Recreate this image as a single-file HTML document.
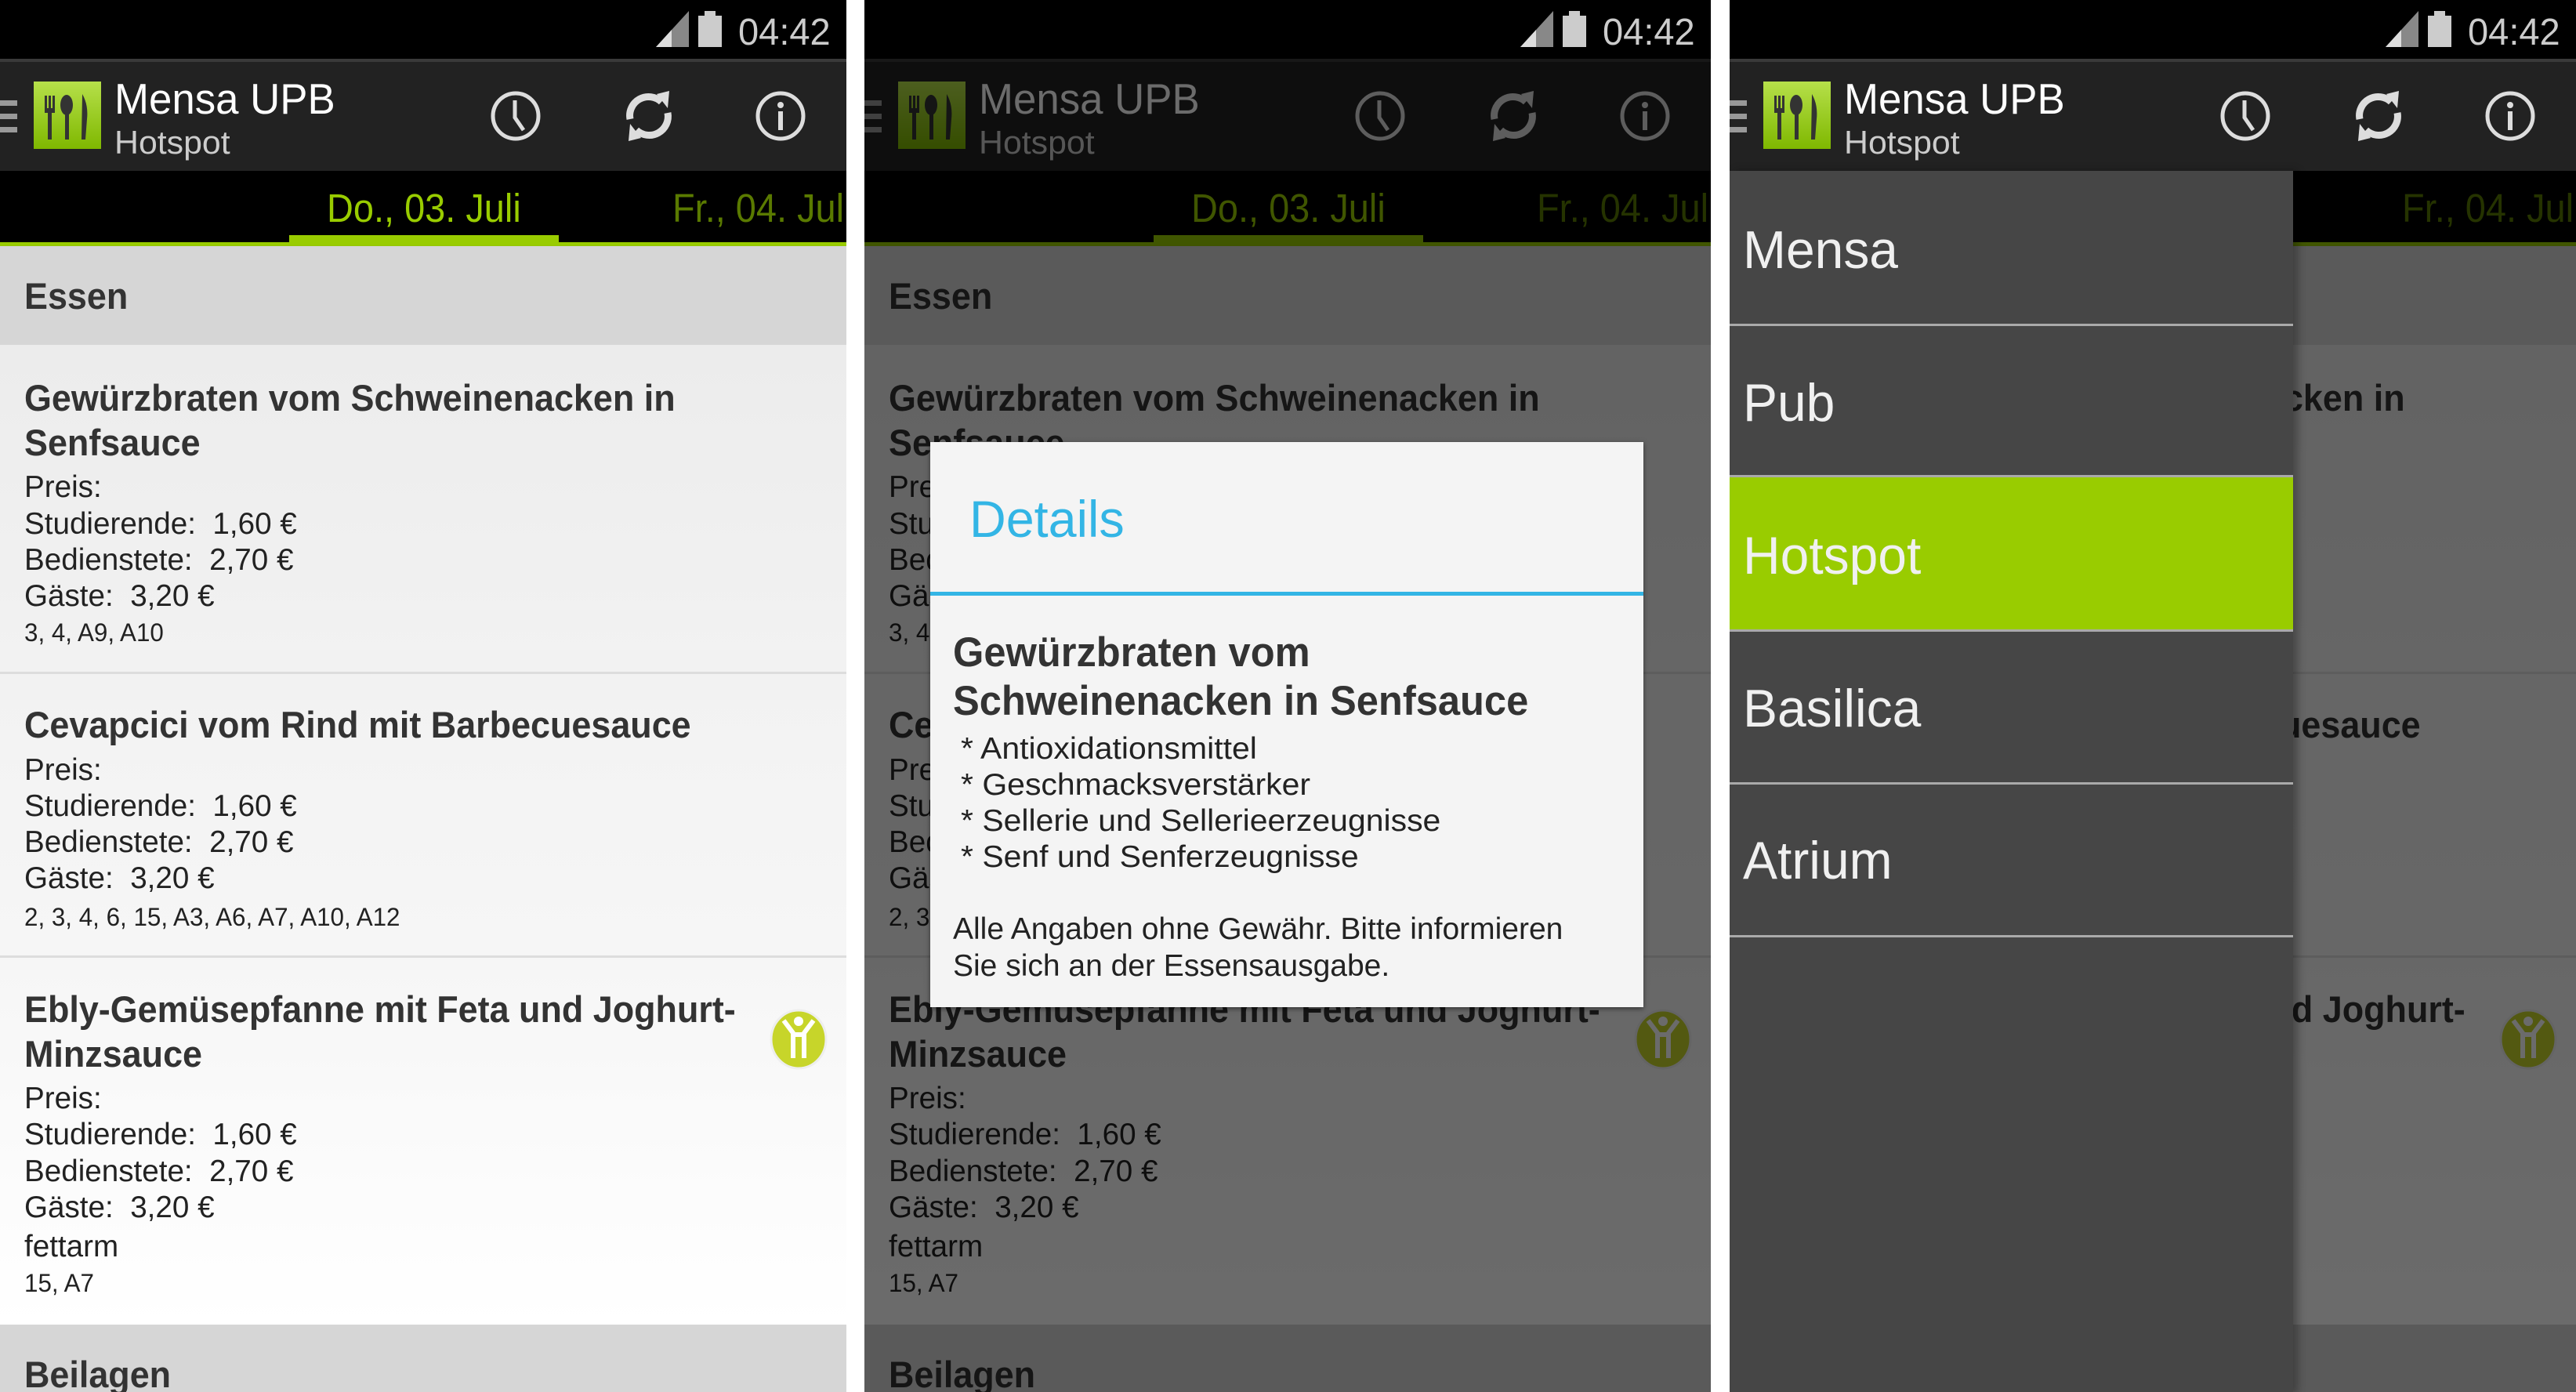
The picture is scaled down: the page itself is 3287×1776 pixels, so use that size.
<!DOCTYPE html>
<html><head><meta charset="utf-8"><style>
*{margin:0;padding:0;box-sizing:border-box}
body{width:3287px;height:1776px;background:#fff;position:relative;overflow:hidden;font-family:"Liberation Sans",sans-serif}
.p{position:absolute;top:0;width:1080px;height:1776px;overflow:hidden;background:#f5f5f5}
.a{position:absolute;white-space:nowrap;transform-origin:left center}
.sb{position:absolute;left:0;top:0;width:1080px;height:75px;background:#000}
.ab{position:absolute;left:0;top:75px;width:1080px;height:143px;background:#222;border-top:4px solid #3a3a3a}
.tb{position:absolute;left:0;top:218px;width:1080px;height:92px;background:#000}
.gl{position:absolute;left:0;top:309px;width:1080px;height:5px;background:#99cc00}
.ind{position:absolute;left:369px;top:300px;width:344px;height:14px;background:#99cc00}
.hd{position:absolute;left:0;width:1080px;background:#d6d6d6}
.it{position:absolute;left:0;width:1080px;border-bottom:3px solid #ddd}
.ti{font-weight:bold;font-size:47px;line-height:57px;color:#333;left:31px;transform:scaleX(.955)}
.bd{font-size:39px;line-height:46px;color:#222;left:31px;transform:scaleX(.99)}
.cd{font-size:32px;line-height:38px;color:#222;left:31px;transform:scaleX(.98)}
</style></head><body>

<div class="p" style="left:0">
<div class="sb"></div>
<svg class="a" style="left:835px;top:12px" width="110" height="50" viewBox="0 0 110 50"><polygon points="2,48 44,2 44,48" fill="#888"/><polygon points="2,48 22,26 22,48" fill="#ddd"/><rect x="56" y="8" width="30" height="40" fill="#ccc"/><rect x="64" y="2" width="14" height="7" fill="#ccc"/></svg>
<div class="a" style="left:942px;top:14px;font-size:48px;color:#ccc;transform:scaleX(.98)">04:42</div>
<div class="ab"></div>
<div class="a" style="left:0;top:128px;width:22px;height:7px;background:#999"></div><div class="a" style="left:0;top:145px;width:22px;height:7px;background:#999"></div><div class="a" style="left:0;top:162px;width:22px;height:7px;background:#999"></div>
<svg class="a" style="left:43px;top:104px" width="86" height="86" viewBox="0 0 86 86"><defs><linearGradient id="g" x1="0" y1="0" x2="0" y2="1"><stop offset="0" stop-color="#b6e04a"/><stop offset="1" stop-color="#7fb800"/></linearGradient></defs><rect width="86" height="86" fill="url(#g)"/><g fill="#333"><rect x="14" y="18" width="3" height="18"/><rect x="19" y="18" width="3" height="18"/><rect x="24" y="18" width="3" height="18"/><rect x="14" y="34" width="13" height="6"/><rect x="18" y="38" width="5" height="36"/><ellipse cx="42" cy="30" rx="8" ry="13"/><rect x="40" y="40" width="5" height="34"/><path d="M62 16 Q70 30 68 48 L66 74 L61 74 Z"/></g></svg>
<div class="a" style="left:146px;top:96px;font-size:55px;line-height:60px;color:#fff;transform:scaleX(.96)">Mensa UPB</div>
<div class="a" style="left:146px;top:160px;font-size:42px;line-height:44px;color:#ccc;transform:scaleX(1.02)">Hotspot</div>
<svg class="a" style="left:624px;top:114px" width="68" height="68" viewBox="0 0 68 68"><circle cx="34" cy="34" r="29" fill="none" stroke="#ddd" stroke-width="5"/><path d="M33 14 L33 36 L44 52" fill="none" stroke="#ddd" stroke-width="5"/></svg>
<svg class="a" style="left:792px;top:112px" width="72" height="72" viewBox="0 0 72 72"><g fill="none" stroke="#ddd" stroke-width="9"><path d="M12 40 A24 24 0 0 1 52 18"/><path d="M60 32 A24 24 0 0 1 20 54"/></g><polygon points="46,8 62,4 60,26" fill="#ddd"/><polygon points="26,64 10,68 12,46" fill="#ddd"/></svg>
<svg class="a" style="left:962px;top:114px" width="68" height="68" viewBox="0 0 68 68"><circle cx="34" cy="34" r="29" fill="none" stroke="#ddd" stroke-width="5"/><circle cx="34" cy="20" r="4" fill="#ddd"/><rect x="31" y="28" width="6" height="24" fill="#ddd"/></svg>
<div class="tb"></div>
<div class="a" style="left:417px;top:236px;font-size:51px;line-height:60px;color:#99cc00;transform:scaleX(.92)">Do., 03. Juli</div>
<div class="a" style="left:858px;top:236px;font-size:51px;line-height:60px;color:#5a7a00;transform:scaleX(.92)">Fr., 04. Juli</div>
<div class="gl"></div><div class="ind"></div>
<div class="hd" style="top:314px;height:126px;box-shadow:0 6px 8px rgba(0,0,0,.25)"></div>
<div class="a ti" style="top:349px">Essen</div>
<div class="it" style="top:440px;height:420px;background:linear-gradient(#ececec,#f2f2f2);z-index:0"></div>
<div class="it" style="top:860px;height:362px;background:linear-gradient(#f2f2f2,#f6f6f6)"></div>
<div class="it" style="top:1222px;height:468px;background:linear-gradient(#f6f6f6,#fff);border:0"></div>
<div class="hd" style="top:1690px;height:90px"></div>
<div class="a ti" style="top:479px">Gewürzbraten vom Schweinenacken in</div>
<div class="a ti" style="top:536px">Senfsauce</div>
<div class="a bd" style="top:599px">Preis:</div>
<div class="a bd" style="top:646px">Studierende:&nbsp; 1,60 €</div>
<div class="a bd" style="top:692px">Bedienstete:&nbsp; 2,70 €</div>
<div class="a bd" style="top:738px">Gäste:&nbsp; 3,20 €</div>
<div class="a cd" style="top:788px">3, 4, A9, A10</div>
<div class="a ti" style="top:896px">Cevapcici vom Rind mit Barbecuesauce</div>
<div class="a bd" style="top:960px">Preis:</div>
<div class="a bd" style="top:1006px">Studierende:&nbsp; 1,60 €</div>
<div class="a bd" style="top:1052px">Bedienstete:&nbsp; 2,70 €</div>
<div class="a bd" style="top:1098px">Gäste:&nbsp; 3,20 €</div>
<div class="a cd" style="top:1151px">2, 3, 4, 6, 15, A3, A6, A7, A10, A12</div>
<div class="a ti" style="top:1259px">Ebly-Gemüsepfanne mit Feta und Joghurt-</div>
<div class="a ti" style="top:1316px">Minzsauce</div>
<div class="a bd" style="top:1379px">Preis:</div>
<div class="a bd" style="top:1425px">Studierende:&nbsp; 1,60 €</div>
<div class="a bd" style="top:1472px">Bedienstete:&nbsp; 2,70 €</div>
<div class="a bd" style="top:1518px">Gäste:&nbsp; 3,20 €</div>
<div class="a bd" style="top:1568px">fettarm</div>
<div class="a cd" style="top:1618px">15, A7</div>
<div class="a ti" style="top:1725px">Beilagen</div>
<svg class="a" style="left:980px;top:1286px" width="78" height="80" viewBox="0 0 78 80"><ellipse cx="39" cy="40" rx="35" ry="37" fill="#c7d52a" stroke="#eee" stroke-width="3"/><circle cx="39" cy="17" r="6" fill="#fff"/><path d="M20 16 L32 32 L32 64 M46 64 L46 32 L58 16 M32 34 L46 34" fill="none" stroke="#fff" stroke-width="6" stroke-linejoin="round"/></svg>
</div>

<div id="p2" class="p" style="left:1103px"></div>
<div id="p3" class="p" style="left:2207px"></div>

<script>
var src=document.querySelector('.p').innerHTML;
var p2=document.getElementById('p2');p2.innerHTML=src+
'<div class="a" style="left:0;top:75px;width:1080px;height:1701px;background:rgba(0,0,0,.58)"></div>'+
'<div class="a" style="left:84px;top:564px;width:910px;height:721px;background:#f4f4f4;box-shadow:0 2px 6px rgba(0,0,0,.5)"></div>'+
'<div class="a" style="left:134px;top:624px;font-size:66px;line-height:76px;color:#33b5e5;transform:scaleX(.98)">Details</div>'+
'<div class="a" style="left:84px;top:755px;width:910px;height:5px;background:#33b5e5"></div>'+
'<div class="a ti" style="left:113px;top:802px;font-size:53px;line-height:62px">Gewürzbraten vom</div>'+
'<div class="a ti" style="left:113px;top:864px;font-size:53px;line-height:62px">Schweinenacken in Senfsauce</div>'+
'<div class="a bd" style="left:123px;top:933px;transform:scaleX(1.05)">* Antioxidationsmittel</div>'+
'<div class="a bd" style="left:123px;top:979px;transform:scaleX(1.05)">* Geschmacksverstärker</div>'+
'<div class="a bd" style="left:123px;top:1025px;transform:scaleX(1.05)">* Sellerie und Sellerieerzeugnisse</div>'+
'<div class="a bd" style="left:123px;top:1071px;transform:scaleX(1.05)">* Senf und Senferzeugnisse</div>'+
'<div class="a bd" style="left:113px;top:1163px;transform:scaleX(1.0)">Alle Angaben ohne Gewähr. Bitte informieren</div>'+
'<div class="a bd" style="left:113px;top:1210px;transform:scaleX(1.0)">Sie sich an der Essensausgabe.</div>';
var p3=document.getElementById('p3');var h=src+
'<div class="a" style="left:0;top:218px;width:1080px;height:1560px;background:rgba(0,0,0,.58)"></div>'+
'<div class="a" style="left:0;top:218px;width:719px;height:1560px;background:#464646;box-shadow:6px 0 10px rgba(0,0,0,.3)"></div>'+
'<div class="a" style="left:0;top:607px;width:719px;height:196px;background:#99cc00"></div>';
var names=['Mensa','Pub','Hotspot','Basilica','Atrium'],cs=[319,514,709,904,1098],ss=[413,606,803,998,1193];
for(var i=0;i<5;i++){h+='<div class="a" style="left:17px;top:'+(cs[i]-38)+'px;font-size:68px;line-height:76px;color:#f0f0f0;transform:scaleX(.97)">'+names[i]+'</div><div class="a" style="left:0;top:'+ss[i]+'px;width:719px;height:3px;background:#aaa"></div>';}
p3.innerHTML=h;
</script>
</body></html>
